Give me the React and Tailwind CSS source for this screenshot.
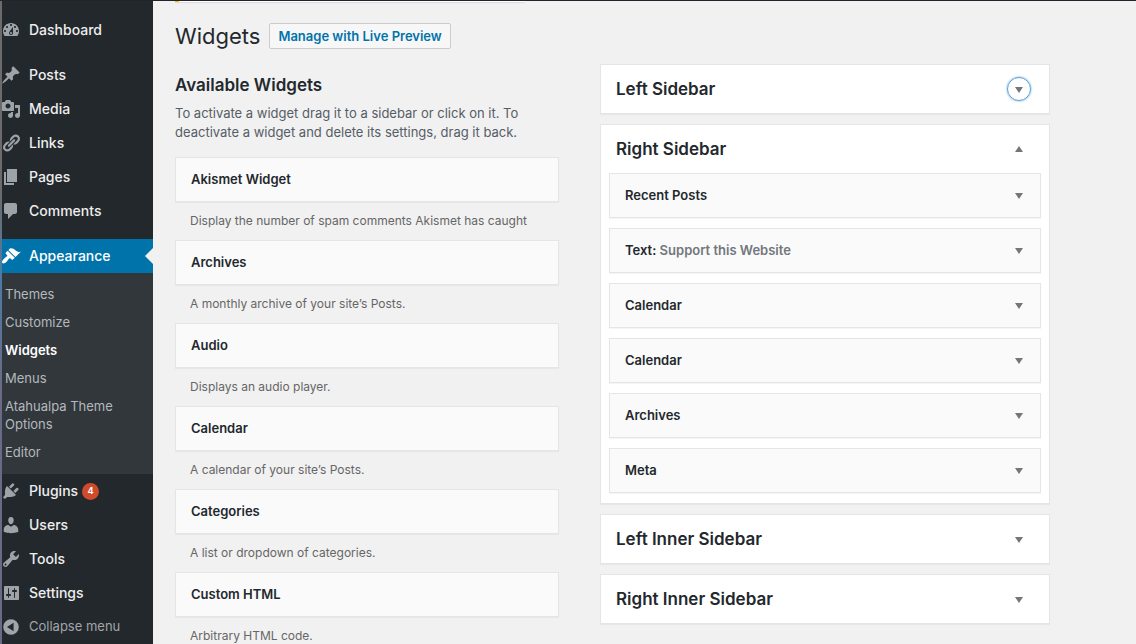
import React from 'react';
import { clsx } from 'clsx';

const ICONS = {
  dashboard:
    'M3.76 16h12.48c1.1-1.37 1.76-3.11 1.76-5 0-4.42-3.58-8-8-8s-8 3.58-8 8c0 1.89.66 3.63 1.76 5zM10 4c.55 0 1 .45 1 1s-.45 1-1 1-1-.45-1-1 .45-1 1-1zM6 6c.55 0 1 .45 1 1s-.45 1-1 1-1-.45-1-1 .45-1 1-1zm8 0c.55 0 1 .45 1 1s-.45 1-1 1-1-.45-1-1 .45-1 1-1zm-5.37 5.55L12 7v6c0 1.1-.9 2-2 2s-2-.9-2-2c0-.57.24-1.08.63-1.45zM4 10c.55 0 1 .45 1 1s-.45 1-1 1-1-.45-1-1 .45-1 1-1zm12 0c.55 0 1 .45 1 1s-.45 1-1 1-1-.45-1-1 .45-1 1-1zm-5 3c0-.55-.45-1-1-1s-1 .45-1 1 .45 1 1 1 1-.45 1-1z',
  post: 'M10.44 3.02l1.82-1.82 6.36 6.35-1.83 1.82c-1.05-.68-2.48-.57-3.41.36l-.75.75c-.92.93-1.04 2.35-.35 3.41l-1.83 1.82-2.41-2.41-2.8 2.79c-.42.42-3.38 2.71-3.8 2.29s1.86-3.39 2.28-3.81l2.79-2.79L4.1 9.36l1.83-1.82c1.05.69 2.48.57 3.4-.36l.75-.75c.93-.92 1.05-2.35.36-3.41z',
  media:
    'M13 11V4c0-.55-.45-1-1-1h-1.67L9 1H5L3.67 3H2c-.55 0-1 .45-1 1v7c0 .55.45 1 1 1h10c.55 0 1-.45 1-1zM7 4.5c1.38 0 2.5 1.12 2.5 2.5S8.38 9.5 7 9.5 4.5 8.38 4.5 7 5.62 4.5 7 4.5zM14 6h5v10.5c0 1.38-1.12 2.5-2.5 2.5S14 17.88 14 16.5s1.12-2.5 2.5-2.5c.17 0 .34.02.5.05V9h-3V6zm-4 8.05V13h2v3.5c0 1.38-1.12 2.5-2.5 2.5S7 17.88 7 16.5 8.12 14 9.5 14c.17 0 .34.02.5.05z',
  links:
    'M17.74 2.76c1.68 1.69 1.68 4.41 0 6.1l-1.53 1.52c-1.12 1.12-2.7 1.47-4.14 1.09l2.62-2.61.76-.77.76-.76c.84-.84.84-2.2 0-3.04-.84-.85-2.2-.85-3.04 0l-.77.76-3.38 3.38c-.37-1.44-.02-3.02 1.1-4.14l1.52-1.53c1.69-1.68 4.42-1.68 6.1 0zM8.59 13.43l5.34-5.34c.42-.42.42-1.1 0-1.52-.44-.43-1.13-.39-1.53 0l-5.33 5.34c-.42.42-.42 1.1 0 1.52.44.43 1.13.39 1.52 0zm-.76 2.29l4.14-4.15c.38 1.44.03 3.02-1.09 4.14l-1.52 1.53c-1.69 1.68-4.41 1.68-6.1 0-1.68-1.68-1.68-4.42 0-6.1l1.53-1.52c1.12-1.12 2.7-1.47 4.14-1.1l-4.14 4.15c-.85.84-.85 2.2 0 3.05.84.84 2.2.84 3.04 0z',
  pages: 'M6 15V2h10v13H6zm-1 1h8v2H3V5h2v11z',
  comments: 'M5 2h9c1.1 0 2 .9 2 2v7c0 1.1-.9 2-2 2h-2l-5 5v-5H5c-1.1 0-2-.9-2-2V4c0-1.1.9-2 2-2z',
  appearance:
    'M14.48 11.06L7.41 3.99l1.5-1.5c.5-.56 2.3-.47 3.51.32 1.21.8 1.43 1.28 2.91 2.1 1.18.64 2.45 1.26 4.45.85zm-.71.71L6.7 4.7 4.93 6.47c-.39.39-.39 1.02 0 1.41l1.06 1.06c.39.39.39 1.03 0 1.42-.6.6-1.43 1.11-2.21 1.69-.35.26-.7.53-1.01.84C1.43 14.23.4 16.08 1.4 17.07c.99 1 2.84-.03 4.18-1.36.31-.31.58-.66.85-1.02.57-.78 1.08-1.61 1.69-2.21.39-.39 1.02-.39 1.41 0l1.06 1.06c.39.39 1.02.39 1.41 0z',
  plugins:
    'M13.11 4.36L9.87 7.6 8 5.73l3.24-3.24c.35-.34 1.05-.2 1.56.32.52.51.66 1.21.31 1.55zm-8 1.77l.91-1.12 9.01 9.01-1.19.84c-.71.71-2.63 1.16-3.82 1.16H6.14L4.9 17.26c-.59.59-1.54.59-2.12 0-.59-.58-.59-1.53 0-2.12l1.24-1.24v-3.88c0-1.13.4-3.19 1.09-3.89zm7.26 3.97l3.24-3.24c.34-.35 1.04-.21 1.55.31.52.51.66 1.21.31 1.55l-3.24 3.25z',
  users:
    'M10 9.25c-2.27 0-2.73-3.44-2.73-3.44C7 4.02 7.82 2 9.97 2c2.16 0 2.98 2.02 2.71 3.81 0 0-.41 3.44-2.68 3.44zm0 2.57L12.72 10c2.39 0 4.52 2.33 4.52 4.53v2.49s-3.65 1.13-7.24 1.13c-3.65 0-7.24-1.13-7.24-1.13v-2.49c0-2.25 1.94-4.48 4.47-4.48z',
  tools:
    'M16.68 9.77c-1.34 1.34-3.3 1.67-4.95.99l-5.41 6.52c-.99.99-2.59.99-3.58 0s-.99-2.59 0-3.57l6.52-5.42c-.68-1.65-.35-3.61.99-4.95 1.28-1.28 3.12-1.62 4.72-1.06l-2.89 2.89 2.82 2.82 2.86-2.87c.53 1.58.18 3.39-1.08 4.65zM3.81 16.21c.4.39 1.04.39 1.43 0 .4-.4.4-1.04 0-1.43-.39-.4-1.03-.4-1.43 0-.39.39-.39 1.03 0 1.43z',
  settings:
    'M18 16V4c0-.55-.45-1-1-1H4c-.55 0-1 .45-1 1v12c0 .55.45 1 1 1h13c.55 0 1-.45 1-1zM8 11h1c.55 0 1 .45 1 1s-.45 1-1 1H8v1.5c0 .28-.22.5-.5.5s-.5-.22-.5-.5V13H6c-.55 0-1-.45-1-1s.45-1 1-1h1V5.5c0-.28.22-.5.5-.5s.5.22.5.5V11zm5-2h-1c-.55 0-1-.45-1-1s.45-1 1-1h1V5.5c0-.28.22-.5.5-.5s.5.22.5.5V7h1c.55 0 1 .45 1 1s-.45 1-1 1h-1v5.5c0 .28-.22.5-.5.5s-.5-.22-.5-.5V9z',
  collapse: 'M10 2.2a7.8 7.8 0 1 0 0 15.6 7.8 7.8 0 0 0 0-15.6zM12.6 5.8v8.4L6 10z',
  down: 'M14 8l-4 6-4-6z',
  up: 'M6 13l4-6 4 6z',
};

const Icon = ({ name, className }) => (
  <svg viewBox="0 0 20 20" fill="currentColor" fillRule="evenodd" className={clsx('size-5 shrink-0', className)} aria-hidden="true">
    <path d={ICONS[name]} />
  </svg>
);

const contentMenu = [
  { icon: 'post', label: 'Posts' },
  { icon: 'media', label: 'Media' },
  { icon: 'links', label: 'Links' },
  { icon: 'pages', label: 'Pages' },
  { icon: 'comments', label: 'Comments' },
];

const adminMenu = [
  { icon: 'plugins', label: 'Plugins', count: 4 },
  { icon: 'users', label: 'Users' },
  { icon: 'tools', label: 'Tools' },
  { icon: 'settings', label: 'Settings' },
];

const appearanceMenu = ['Themes', 'Customize', 'Widgets', 'Menus', 'Atahualpa Theme Options', 'Editor'];

const availableWidgets = [
  { name: 'Akismet Widget', description: 'Display the number of spam comments Akismet has caught' },
  { name: 'Archives', description: 'A monthly archive of your site’s Posts.' },
  { name: 'Audio', description: 'Displays an audio player.' },
  { name: 'Calendar', description: 'A calendar of your site’s Posts.' },
  { name: 'Categories', description: 'A list or dropdown of categories.' },
  { name: 'Custom HTML', description: 'Arbitrary HTML code.' },
];

const rightSidebarWidgets = [
  { name: 'Recent Posts' },
  { name: 'Text', title: 'Support this Website' },
  { name: 'Calendar' },
  { name: 'Calendar' },
  { name: 'Archives' },
  { name: 'Meta' },
];

const MenuItem = ({ icon, label, count, active }) => (
  <li>
    <a
      href="#"
      className={clsx(
        'relative flex h-[34px] items-center gap-2 text-sm font-medium',
        active ? 'bg-[#0073aa] text-white' : 'text-[#eeeeee]'
      )}
    >
      <Icon name={icon} className={active ? 'text-white' : 'text-[#9ea3a8]'} />
      <span className="flex items-center gap-1">
        {label}
        {count && (
          <span className="flex size-[17px] items-center justify-center rounded-full bg-[#d04a2b] text-[9px] font-bold text-white">
            {count}
          </span>
        )}
      </span>
      {active && (
        <span className="absolute right-0 border-y-8 border-r-8 border-y-transparent border-r-[#f1f1f1]" />
      )}
    </a>
  </li>
);

const AdminMenu = () => (
  <nav className="flex w-[153px] shrink-0 bg-[#23282d]">
    {/* Sliver of the desktop behind the window */}
    <div className="z-10 -mr-px w-0.5 shrink-0 bg-linear-to-b from-[#6b6b6b] from-30% via-[#4a7ba6] via-42% to-[#6b6a85] to-60%" />
    <div className="flex-1 pt-3">
      <ul>
        <MenuItem icon="dashboard" label="Dashboard" />
      </ul>
      <ul className="mt-[11px]">
        {contentMenu.map((item) => (
          <MenuItem key={item.label} {...item} />
        ))}
      </ul>
      <ul className="mt-[11px]">
        <MenuItem icon="appearance" label="Appearance" active />
      </ul>
      <ul className="bg-[#32373c] pt-[7px] pb-2">
        {appearanceMenu.map((label) => (
          <li key={label}>
            <a
              href="#"
              className={clsx(
                'block py-[5px] pr-6 pl-1 text-[13px] leading-[18px]',
                label === 'Widgets' ? 'font-semibold text-white' : 'text-[#b4b9be]'
              )}
            >
              {label}
            </a>
          </li>
        ))}
      </ul>
      <ul>
        {adminMenu.map((item) => (
          <MenuItem key={item.label} {...item} />
        ))}
      </ul>
      <button type="button" className="flex h-[34px] w-full items-center gap-2 text-[13px] text-[#a0a5aa]">
        <Icon name="collapse" />
        Collapse menu
      </button>
    </div>
  </nav>
);

const ToggleButton = ({ label, open, focused }) => (
  <button
    type="button"
    aria-expanded={!!open}
    aria-label={`Toggle ${label}`}
    className={clsx(
      'flex size-6 shrink-0 items-center justify-center rounded-full text-[#72777c]',
      focused && 'border border-[#5b9dd9] shadow-[0_0_2px_rgba(30,140,190,0.8)]'
    )}
  >
    <Icon name={open ? 'up' : 'down'} />
  </button>
);

const WidgetCard = ({ name, title, toggle }) => (
  <div className="flex h-[45px] items-start justify-between border border-[#e5e5e5] bg-[#fafafa] pt-[9px] pr-[9px] pl-[15px] shadow-[0_1px_1px_rgba(0,0,0,0.04)]">
    <h3 className="text-[13px] leading-[25px] font-semibold text-[#23282d]">
      {name}
      {title && <>: <span className="text-[#72777c]">{title}</span></>}
    </h3>
    {toggle && <ToggleButton label={name} />}
  </div>
);

const SidebarPanel = ({ title, widgets, focused }) => (
  <section className="border border-[#e5e5e5] bg-white shadow-[0_1px_1px_rgba(0,0,0,0.04)]">
    <div className="flex h-12 items-center justify-between pr-[18px] pl-[15px]">
      <h2 className="text-[17px] leading-6 font-semibold text-[#23282d]">{title}</h2>
      <ToggleButton label={title} open={!!widgets} focused={focused} />
    </div>
    {widgets && (
      <div className="flex flex-col gap-2.5 px-2 pb-2.5">
        {widgets.map((widget, i) => (
          <WidgetCard key={i} {...widget} toggle />
        ))}
      </div>
    )}
  </section>
);

const App = () => {
  return (
    <div className="flex min-h-screen flex-col bg-[#f1f1f1] font-['Inter','Open_Sans',sans-serif] text-[#23282d]">
      <div className="h-px bg-[#23232d]" />
      <div className="flex flex-1">
        <AdminMenu />

        <main className="min-w-0 flex-1 pr-[86px] pl-[22px]">
          {/* Bottom edge of the notice above the heading */}
          <div className="h-px w-2/5 border-l-4 border-[#ffb900] bg-white shadow-[0_1px_1px_rgba(0,0,0,0.1)]" />

          <header className="flex items-center gap-[9px] pt-[21px]">
            <h1 className="text-[22px] leading-[26px]">Widgets</h1>
            <a
              href="#"
              className="rounded-xs border border-[#cccccc] bg-[#f7f7f7] px-2 text-[13px] leading-6 font-semibold text-[#0073aa]"
            >
              Manage with Live Preview
            </a>
          </header>

          <div className="mt-[15px] grid grid-cols-[384fr_450fr] items-start gap-x-[41px]">
            <section>
              <div className="mt-[9px] mb-[15px]">
                <h2 className="text-[17px] leading-6 font-semibold">Available Widgets</h2>
                <p className="mt-[7px] text-[13px] leading-[19px] text-[#555d66]">
                  To activate a widget drag it to a sidebar or click on it. To deactivate a widget and delete its
                  settings, drag it back.
                </p>
              </div>
              {availableWidgets.map((widget) => (
                <div key={widget.name}>
                  <WidgetCard name={widget.name} />
                  <p className="h-[38px] truncate px-[15px] pt-[9px] text-xs leading-[19px] text-[#666666]">
                    {widget.description}
                  </p>
                </div>
              ))}
            </section>

            <div className="flex flex-col gap-2.5">
              <SidebarPanel title="Left Sidebar" focused />
              <SidebarPanel title="Right Sidebar" widgets={rightSidebarWidgets} />
              <SidebarPanel title="Left Inner Sidebar" />
              <SidebarPanel title="Right Inner Sidebar" />
            </div>
          </div>
        </main>
      </div>
    </div>
  );
};

export default App;
